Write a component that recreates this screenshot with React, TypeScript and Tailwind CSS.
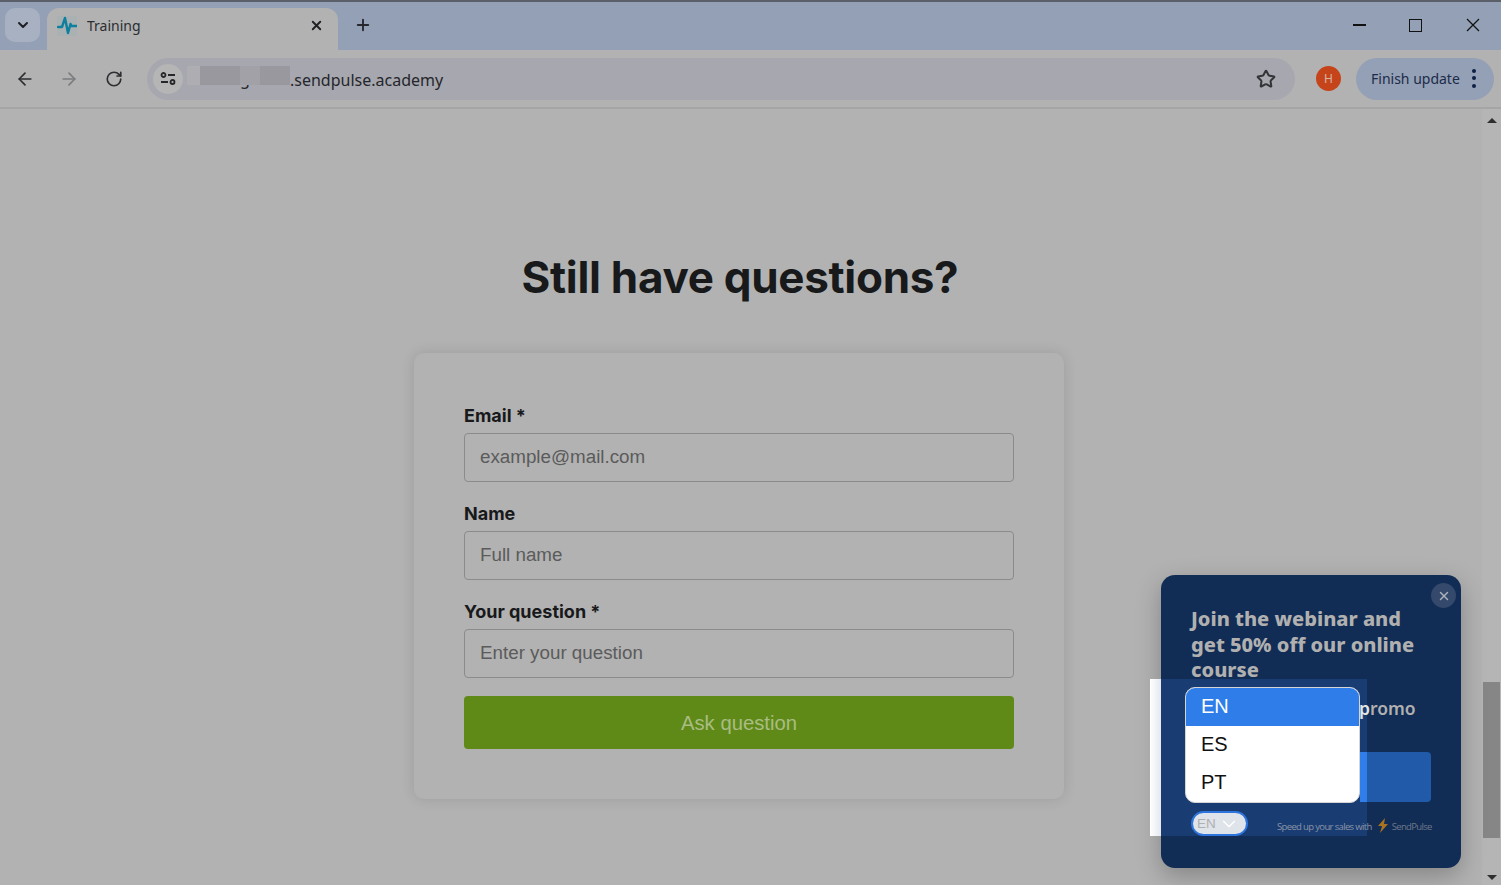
import React from "react";
import { ArrowLeft, ArrowRight, ChevronDown, Plus, RotateCw, Star, X } from "lucide-react";

const sans = "font-['Liberation_Sans',Arial,sans-serif]";

function TabStrip() {
  return (
    <div className="flex h-[50px] shrink-0 items-end border-t-2 border-[#5a5f69] bg-[#94a0b5]">
      <div className="mb-[8px] ml-[5px] flex h-[34px] w-[35px] items-center justify-center rounded-[10px] bg-[#a8b1c2]">
        <ChevronDown size={16} strokeWidth={3} className="text-[#1d1f24]" />
      </div>
      <div className="relative ml-[7px] flex h-[42px] w-[291px] items-center rounded-t-[12px] bg-[#b2b2b2] pb-[7px] pl-[10px]">
        <svg width="20" height="20" viewBox="0 0 20 20" fill="none" className="bg-[#a9b1b3]">
          <path d="M1 11h4l3-9 3 15 2.5-9 1 2h5" stroke="#0e7f9c" strokeWidth="2.4" strokeLinejoin="round" strokeLinecap="round" />
        </svg>
        <span className="ml-[10px] font-['Noto_Sans',sans-serif] text-[14px] text-[#2c2d30]">Training</span>
        <X size={15} strokeWidth={3} className="absolute left-[262px] top-[10px] text-[#1f2024]" />
      </div>
      <Plus size={18} strokeWidth={2.5} className="mb-[16px] ml-[16px] text-[#26282e]" />
      <div className="mb-[18px] ml-auto flex items-center text-[#111]">
        <div className="h-[1.5px] w-[13px] bg-[#111]" />
        <div className="ml-[43px] h-[13px] w-[13px] border-[1.5px] border-[#111]" />
        <svg width="14" height="14" viewBox="0 0 14 14" stroke="currentColor" strokeWidth="1.2" className="ml-[44px] mr-[21px]">
          <path d="M1 1l12 12M13 1L1 13" />
        </svg>
      </div>
    </div>
  );
}

function Toolbar() {
  return (
    <div className="flex h-[59px] shrink-0 items-center border-b-2 border-[#a5a5a5] bg-[#b2b2b2]">
      <ArrowLeft size={20} strokeWidth={2} className="ml-[15px] text-[#2d2e31]" />
      <ArrowRight size={20} strokeWidth={2} className="ml-[24px] text-[#7b7c7e]" />
      <RotateCw size={18} strokeWidth={2.2} className="ml-[26px] text-[#2d2e31]" />
      <div className="ml-[24px] flex h-[42px] w-[1148px] items-center rounded-full bg-[#a7a8af] pl-[6px] pr-[19px]">
        <div className="flex h-[30px] w-[30px] items-center justify-center rounded-full bg-[#b5b5b5]">
          <svg width="16" height="14" viewBox="0 0 16 14" fill="none" stroke="#26272a" strokeWidth="1.8">
            <circle cx="3.5" cy="3" r="2" />
            <path d="M8 3h7M1 10h7" />
            <circle cx="12.5" cy="10" r="2" />
          </svg>
        </div>
        <div className="relative ml-[4px] mt-[8px] flex h-[19px] w-[103px] self-start">
          <span className="absolute left-[53px] top-[3px] font-['Noto_Sans',sans-serif] text-[16px] leading-[20px] text-[#25262b]">g</span>
          <div className="relative w-[13px] bg-[#aeaeb2]" />
          <div className="relative w-[40px] bg-[#99989e]" />
          <div className="relative w-[20px] bg-[#a2a1a7]" />
          <div className="relative w-[30px] bg-[#99989e]" />
        </div>
        <span className="pt-[2px] font-['Noto_Sans',sans-serif] text-[16px] text-[#25262b]">.sendpulse.academy</span>
        <Star size={20} strokeWidth={2.4} className="ml-auto text-[#333438]" />
      </div>
      <div className="ml-[21px] flex h-[25px] w-[25px] items-center justify-center rounded-full bg-[#c5441a] font-['Noto_Sans',sans-serif] text-[12px] text-[#d8b5a8]">
        H
      </div>
      <div className="ml-[15px] flex h-[42px] w-[138px] items-center rounded-full bg-[#94a0b5] pb-px pl-[15px] font-['Noto_Sans',sans-serif] text-[14px] text-[#1c2b4a]">
        Finish update
        <div className="ml-[12px] flex flex-col gap-[3.5px]">
          <span className="h-[4px] w-[4px] rounded-full bg-[#0d1f45]" />
          <span className="h-[4px] w-[4px] rounded-full bg-[#0d1f45]" />
          <span className="h-[4px] w-[4px] rounded-full bg-[#0d1f45]" />
        </div>
      </div>
    </div>
  );
}

function Field({ label, placeholder }: { label: string; placeholder: string }) {
  return (
    <div className="mb-[19px]">
      <div className="mb-[5px] pt-px font-['Inter',sans-serif] text-[18px] font-bold leading-6 text-[#18191b]">{label}</div>
      <div className={`flex h-[49px] items-center rounded-[4px] border border-[#8b8b8b] px-[15px] text-[18.8px] text-[#5b5b5b] ${sans}`}>
        {placeholder}
      </div>
    </div>
  );
}

function Scrollbar() {
  return (
    <div className="flex w-[19px] shrink-0 flex-col items-center bg-[#b5b5b5]">
      <div className="mt-[9px] h-0 w-0 border-x-[5px] border-b-[5px] border-x-transparent border-b-[#2e2e2e]" />
      <div className="mt-[559px] h-[156px] w-[17px] bg-[#868686]" />
      <div className="mt-[37px] h-0 w-0 border-x-[5px] border-t-[5px] border-x-transparent border-t-[#2e2e2e]" />
    </div>
  );
}

function WebinarPopup() {
  return (
    <div className="absolute left-[1161px] top-[575px] h-[293px] w-[300px] rounded-[14px] bg-[#112c55] px-[30px] pt-[31px] shadow-[0_8px_24px_rgba(0,0,0,0.25)]">
      <div className="absolute right-[5px] top-[8px] flex h-[25px] w-[25px] items-center justify-center rounded-full bg-[#34496b]">
        <X size={14} strokeWidth={2.5} className="text-[#a9b0bc]" />
      </div>
      <div className="font-['Noto_Sans',sans-serif] text-[20px] font-extrabold leading-[25.5px] text-[#b0b0b0]">
        Join the webinar and get 50% off our online course
      </div>
      <div className="mt-[69.5px] h-[50px] rounded-[4px] bg-[#205aa8]" />
    </div>
  );
}

function LanguageLayer() {
  return (
    <div className="absolute left-[1150px] top-[679px] flex h-[157px] w-[217px] bg-[#193c73]">
      <div className="h-full w-[11px] bg-gradient-to-r from-white to-[#e6e8ef]" />
      <div className="absolute left-[210px] top-[73px] h-[50px] w-[7px] bg-[#2f7eea]" />
      <div className="absolute left-[209px] top-[15px] whitespace-nowrap font-['Noto_Sans',sans-serif] text-[17.5px] font-semibold leading-[28px] text-[#b0b0b0]">
        <span className="text-[#e4e4e4]">p</span>romo
      </div>
      <div className={`absolute left-[35px] top-[8px] w-[175px] overflow-hidden rounded-[10px] border border-[#d5d5d5] bg-white text-[20px] leading-[36px] text-[#111] ${sans}`}>
        <div className="h-[38px] bg-[#2e7de9] pl-[15px] text-white">EN</div>
        <div className="h-[38px] pl-[15px]">ES</div>
        <div className="h-[38px] pl-[15px]">PT</div>
      </div>
      <div className={`absolute left-[41px] top-[132px] flex h-[25px] w-[57px] items-center rounded-full border-[2px] border-[#2e74dd] bg-[#dfe3ea] pl-[4px] pt-px text-[13.5px] text-[#b0b0b0] ${sans}`}>
        EN
        <ChevronDown size={22} strokeWidth={1.5} className="ml-[2px] text-white" />
      </div>
    </div>
  );
}

function PoweredBy() {
  return (
    <div className="absolute left-[1277px] top-[818px] flex h-[18px] items-center font-['Open_Sans',sans-serif] text-[9.5px] tracking-[-0.65px] text-[#8a94a6]">
      Speed up your sales with
      <svg width="12" height="15" viewBox="0 0 12 15" className="mb-[3px] ml-[5px]">
        <path d="M8 0 1 8h4l-2 7 8-9H7z" fill="#a8741f" />
      </svg>
      <span className="ml-[3px] text-[#6d7889]">SendPulse</span>
    </div>
  );
}

export default function App() {
  return (
    <div className="relative flex h-[885px] w-[1501px] flex-col overflow-hidden bg-[#b2b2b2]">
      <TabStrip />
      <Toolbar />
      <div className="flex flex-1">
        <main className="flex flex-1 flex-col items-center pr-[4px] pt-[142px]">
          <h1 className="pl-[2px] font-['Inter',sans-serif] text-[44px] font-bold leading-[52px] tracking-[-0.3px] text-[#18191b]">
            Still have questions?
          </h1>
          <div className="mt-[50px] h-[446px] w-[650px] rounded-[10px] bg-[#b2b2b2] p-[50px] shadow-[0_0_14px_rgba(0,0,0,0.12)]">
            <Field label="Email *" placeholder="example@mail.com" />
            <Field label="Name" placeholder="Full name" />
            <Field label="Your question *" placeholder="Enter your question" />
            <div className={`-mt-px flex h-[53px] items-center justify-center rounded-[4px] bg-[#5f8a17] pt-[2px] text-[20.3px] text-[#a9bd84] ${sans}`}>
              Ask question
            </div>
          </div>
        </main>
        <Scrollbar />
      </div>
      <WebinarPopup />
      <LanguageLayer />
      <PoweredBy />
    </div>
  );
}
